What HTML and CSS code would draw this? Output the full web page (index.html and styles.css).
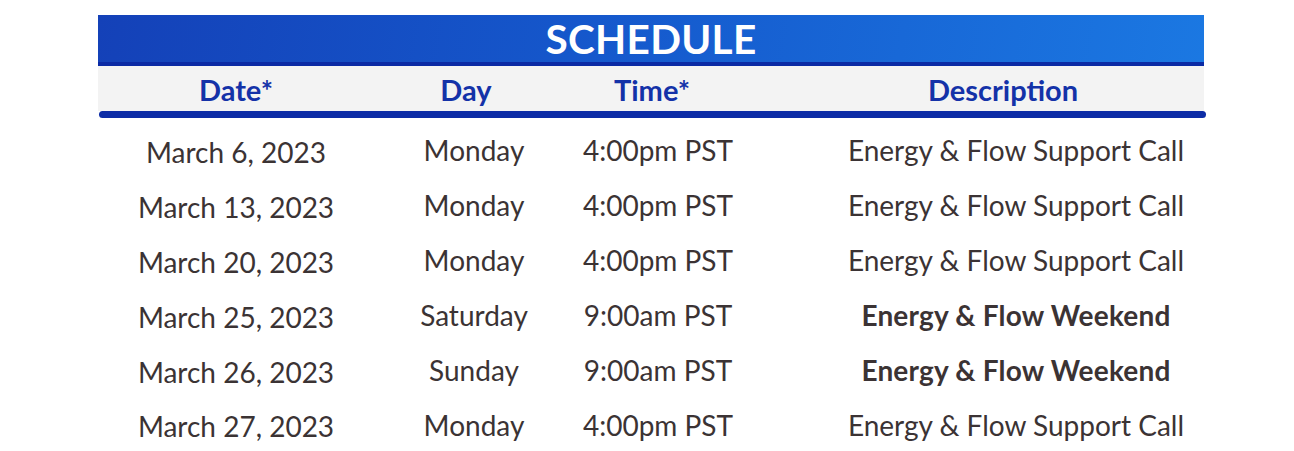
FILE: index.html
```html
<!DOCTYPE html>
<html lang="en">
<head>
<meta charset="utf-8">
<title>Schedule</title>
<link rel="stylesheet" href="styles.css">
</head>
<body>
<div class="schedule">
  <div class="title-bar"><h1 class="title">SCHEDULE</h1></div>
  <div class="head-row">
    <div class="hcell">Date*</div>
    <div class="hcell">Day</div>
    <div class="hcell">Time*</div>
    <div class="hcell">Description</div>
  </div>
  <div class="rule"></div>
  <div class="rows">
    <div class="cell date">March 6, 2023</div><div class="cell">Monday</div><div class="cell">4:00pm PST</div><div class="cell">Energy &amp; Flow Support Call</div>
    <div class="cell date">March 13, 2023</div><div class="cell">Monday</div><div class="cell">4:00pm PST</div><div class="cell">Energy &amp; Flow Support Call</div>
    <div class="cell date">March 20, 2023</div><div class="cell">Monday</div><div class="cell">4:00pm PST</div><div class="cell">Energy &amp; Flow Support Call</div>
    <div class="cell date">March 25, 2023</div><div class="cell">Saturday</div><div class="cell">9:00am PST</div><div class="cell strong">Energy &amp; Flow Weekend</div>
    <div class="cell date">March 26, 2023</div><div class="cell">Sunday</div><div class="cell">9:00am PST</div><div class="cell strong">Energy &amp; Flow Weekend</div>
    <div class="cell date">March 27, 2023</div><div class="cell">Monday</div><div class="cell">4:00pm PST</div><div class="cell">Energy &amp; Flow Support Call</div>
  </div>
</div>
</body>
</html>
```
FILE: styles.css
```css
* { box-sizing: border-box; }
html, body { margin: 0; padding: 0; background: #ffffff; }
body { font-family: Lato, "Open Sans", sans-serif; color: #3b3334; }

.schedule {
  width: 1106px;
  margin: 15px 0 0 98px;
}

.title-bar {
  height: 51px;
  background: linear-gradient(100deg, #1441b8 0%, #1558cc 45%, #1b78e2 100%);
  border-bottom: 4px solid #0b2aa4;
  display: flex;
  align-items: center;
  justify-content: center;
}
.title {
  margin: 0;
  font-size: 40.5px;
  font-weight: 700;
  color: #ffffff;
  letter-spacing: 0.3px;
  line-height: 1;
  padding-top: 2px;
}

.head-row {
  height: 45px;
  background: #f3f3f3;
  display: grid;
  grid-template-columns: 276px 184px 188px 514px;
  align-items: center;
}
.hcell {
  text-align: center;
  font-size: 29px;
  font-weight: 700;
  color: #1432a8;
  line-height: 1;
  padding-top: 2px;
}

.rule {
  height: 7px;
  width: 1107px;
  margin-left: 1px;
  background: #0c2ca6;
  border-radius: 4px;
}

.rows {
  padding-top: 5px;
  display: grid;
  grid-template-columns: 276px 200px 168px 548px;
  grid-auto-rows: 54.9px;
  align-items: center;
}
.cell {
  text-align: center;
  font-size: 28px;
  line-height: 1;
  white-space: nowrap;
}
.cell.date { padding-top: 3px; }
.cell.strong { font-weight: 700; letter-spacing: 0.2px; }
```
